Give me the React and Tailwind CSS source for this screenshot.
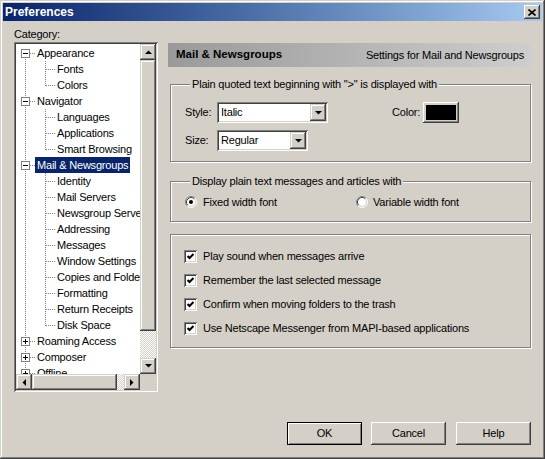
import React from 'react';

// win2k style bevels
const raised = 'shadow-[inset_-1px_-1px_#404040,inset_1px_1px_#d4d0c8,inset_-2px_-2px_#808080,inset_2px_2px_#fff]';
const btn3d = 'shadow-[inset_-1px_-1px_#404040,inset_1px_1px_#fff,inset_-2px_-2px_#808080,inset_2px_2px_#d4d0c8]';
const sunken = 'shadow-[inset_1px_1px_#808080,inset_-1px_-1px_#fff,inset_2px_2px_#404040,inset_-2px_-2px_#d4d0c8]';
const hatch = 'bg-[image:repeating-conic-gradient(#fff_0%_25%,#d4d0c8_0%_50%)] bg-size-[2px_2px]';

const treeItems = [
  { label: 'Appearance', level: 0, first: true },
  { label: 'Fonts', level: 1 },
  { label: 'Colors', level: 1, last: true },
  { label: 'Navigator', level: 0 },
  { label: 'Languages', level: 1 },
  { label: 'Applications', level: 1 },
  { label: 'Smart Browsing', level: 1, last: true },
  { label: 'Mail & Newsgroups', level: 0, selected: true },
  { label: 'Identity', level: 1 },
  { label: 'Mail Servers', level: 1 },
  { label: 'Newsgroup Servers', level: 1 },
  { label: 'Addressing', level: 1 },
  { label: 'Messages', level: 1 },
  { label: 'Window Settings', level: 1 },
  { label: 'Copies and Folders', level: 1 },
  { label: 'Formatting', level: 1 },
  { label: 'Return Receipts', level: 1 },
  { label: 'Disk Space', level: 1, last: true },
  { label: 'Roaming Access', level: 0, closed: true },
  { label: 'Composer', level: 0, closed: true },
  { label: 'Offline', level: 0, closed: true },
];

const checks = [
  'Play sound when messages arrive',
  'Remember the last selected message',
  'Confirm when moving folders to the trash',
  'Use Netscape Messenger from MAPI-based applications',
];

const Arrow = ({ dir }) => {
  if (dir === 'up' || dir === 'down') {
    return (
      <svg width="7" height="4" className="shrink-0">
        <polygon points={dir === 'up' ? '0,4 7,4 3.5,0.5' : '0,0 7,0 3.5,3.5'} fill="#000" />
      </svg>
    );
  }
  return (
    <svg width="4" height="7" className="shrink-0">
      <polygon points={dir === 'left' ? '4,0 4,7 0.5,3.5' : '0,0 0,7 3.5,3.5'} fill="#000" />
    </svg>
  );
};

const ScrollBtn = ({ dir }) => (
  <div className={`w-[16px] h-[16px] shrink-0 bg-[#d4d0c8] flex items-center justify-center ${raised}`}>
    <Arrow dir={dir} />
  </div>
);

const TreeRow = ({ item }) => {
  const child = item.level === 1;
  return (
    <div className="h-[16px] flex items-center whitespace-nowrap">
      <svg width={child ? 39 : 19} height="16" className="shrink-0" shapeRendering="crispEdges">
        <line x1="9.5" y1={item.first ? 8 : 0} x2="9.5" y2="16" stroke="#808080" strokeDasharray="1 1" />
        {child ? (
          <>
            <line x1="29.5" y1="0" x2="29.5" y2={item.last ? 9 : 16} stroke="#808080" strokeDasharray="1 1" />
            <line x1="30" y1="8.5" x2="39" y2="8.5" stroke="#808080" strokeDasharray="1 1" />
          </>
        ) : (
          <>
            <line x1="14" y1="8.5" x2="19" y2="8.5" stroke="#808080" strokeDasharray="1 1" />
            <rect x="5.5" y="4.5" width="8" height="8" fill="#fff" stroke="#808080" />
            <line x1="7" y1="8.5" x2="12" y2="8.5" stroke="#000" />
            {item.closed && <line x1="9.5" y1="6" x2="9.5" y2="11" stroke="#000" />}
          </>
        )}
      </svg>
      <span className={`h-[16px] leading-[16px] px-[2px] ${item.selected ? 'bg-[#0a246a] text-white' : ''}`}>
        {item.label}
      </span>
    </div>
  );
};

const Select = ({ value, className }) => (
  <div className={`h-[21px] p-[2px] bg-white flex ${sunken} ${className}`}>
    <span className="flex-1 leading-[17px] pl-[2px]">{value}</span>
    <div className={`w-[16px] h-[17px] bg-[#d4d0c8] flex items-center justify-center ${raised}`}>
      <Arrow dir="down" />
    </div>
  </div>
);

const Group = ({ legend, className, children }) => (
  <div className={`border border-[#808080] shadow-[inset_1px_1px_#fff,1px_1px_#fff] ${className}`}>
    {legend && (
      <div className="-mt-[7px] ml-[5px] w-fit px-[2px] bg-[#d4d0c8] leading-[13px]">{legend}</div>
    )}
    {children}
  </div>
);

const Radio = ({ checked }) => (
  <svg width="12" height="12" className="shrink-0">
    <circle cx="6" cy="6" r="5" fill="#fff" />
    <path d="M2.11 9.89 A5.5 5.5 0 0 1 9.89 2.11" fill="none" stroke="#808080" />
    <path d="M9.89 2.11 A5.5 5.5 0 0 1 2.11 9.89" fill="none" stroke="#fff" />
    <path d="M2.82 9.18 A4.5 4.5 0 0 1 9.18 2.82" fill="none" stroke="#404040" />
    <path d="M9.18 2.82 A4.5 4.5 0 0 1 2.82 9.18" fill="none" stroke="#d4d0c8" />
    {checked && <circle cx="6" cy="6" r="2" fill="#000" />}
  </svg>
);

const Checkbox = () => (
  <div className={`w-[13px] h-[13px] shrink-0 bg-white flex items-center justify-center ${sunken}`}>
    <svg width="9" height="9">
      <path d="M1.5 4 L3.5 6 L7.5 2" fill="none" stroke="#000" strokeWidth="2" />
    </svg>
  </div>
);

const PushButton = ({ label, isDefault }) => (
  <div
    className={`w-[75px] h-[23px] bg-[#d4d0c8] flex items-center justify-center ${
      isDefault ? 'border border-black shadow-[inset_1px_1px_#fff,inset_-1px_-1px_#808080]' : btn3d
    }`}
  >
    {label}
  </div>
);

export default function App() {
  return (
    <div
      className={`w-[545px] h-[459px] p-[3px] bg-[#d4d0c8] flex flex-col text-[11px] tracking-[-0.2px] text-black font-[family-name:'Liberation_Sans',Arial,sans-serif] ${raised}`}
    >
      {/* title bar */}
      <div className="h-[18px] shrink-0 flex items-center justify-between pl-[2px] pr-[2px] bg-linear-to-r from-[#0a246a] to-[#a6caf0]">
        <span className="text-white font-bold text-[12px] tracking-normal">Preferences</span>
        <div className={`w-[16px] h-[14px] bg-[#d4d0c8] flex items-center justify-center ${btn3d}`}>
          <svg width="8" height="7">
            <path d="M0.5 0.5 L7.5 6.5 M7.5 0.5 L0.5 6.5" stroke="#000" strokeWidth="1.6" />
          </svg>
        </div>
      </div>

      <div className="flex pt-[7px] pl-[11px]">
        {/* category tree */}
        <div className="w-[144px] flex flex-col">
          <div className="leading-[13px]">Category:</div>
          <div className={`mt-[1px] h-[350px] p-[2px] bg-white flex flex-col ${sunken}`}>
            <div className="flex flex-1 min-h-0">
              <div className="flex-1 overflow-hidden pt-[1px]">
                {treeItems.map((item) => (
                  <TreeRow key={item.label} item={item} />
                ))}
              </div>
              <div className="w-[16px] flex flex-col">
                <ScrollBtn dir="up" />
                <div className={`h-[271px] bg-[#d4d0c8] ${raised}`} />
                <div className={`flex-1 ${hatch}`} />
                <ScrollBtn dir="down" />
              </div>
            </div>
            <div className="h-[16px] flex">
              <ScrollBtn dir="left" />
              <div className={`w-[85px] bg-[#d4d0c8] ${raised}`} />
              <div className={`flex-1 ${hatch}`} />
              <ScrollBtn dir="right" />
              <div className="w-[16px] bg-[#d4d0c8]" />
            </div>
          </div>
        </div>

        {/* right pane */}
        <div className="w-[364px] ml-[10px] mt-[15px] flex flex-col">
          <div className="h-[24px] flex items-center justify-between px-[8px] bg-linear-to-r from-[#9a9a9a] to-[#cecece]">
            <span className="font-bold text-[11.5px] tracking-normal">Mail &amp; Newsgroups</span>
            <span>Settings for Mail and Newsgroups</span>
          </div>

          <Group
            legend={'Plain quoted text beginning with ">" is displayed with'}
            className="mt-[17px] ml-[2px] mr-[1px] pb-[10px] pl-[14px]"
          >
            <div className="mt-[11px] h-[21px] flex items-center">
              <span className="w-[32px]">Style:</span>
              <Select value="Italic" className="w-[111px]" />
              <span className="ml-[64px] w-[31px]">Color:</span>
              <div className={`w-[36px] h-[21px] p-[3px] bg-[#d4d0c8] ${btn3d}`}>
                <div className="h-full bg-black" />
              </div>
            </div>
            <div className="mt-[7px] h-[21px] flex items-center">
              <span className="w-[32px]">Size:</span>
              <Select value="Regular" className="w-[91px]" />
            </div>
          </Group>

          <Group
            legend="Display plain text messages and articles with"
            className="mt-[19px] ml-[2px] mr-[1px] pb-[11px] pl-[14px]"
          >
            <div className="mt-[6px] h-[16px] flex items-center">
              <div className="w-[171px] flex items-center gap-[6px]">
                <Radio checked />
                <span>Fixed width font</span>
              </div>
              <div className="flex items-center gap-[5px]">
                <Radio />
                <span>Variable width font</span>
              </div>
            </div>
          </Group>

          <Group className="mt-[12px] ml-[2px] mr-[1px] pt-[13px] pb-[11px] pl-[13px] flex flex-col gap-[8px]">
            {checks.map((c) => (
              <div key={c} className="h-[16px] flex items-center gap-[6px]">
                <Checkbox />
                <span>{c}</span>
              </div>
            ))}
          </Group>
        </div>
      </div>

      <div className="mt-auto flex justify-end gap-[9px] pr-[11px] pb-[11px]">
        <PushButton label="OK" isDefault />
        <PushButton label="Cancel" />
        <div className="ml-[1px]">
          <PushButton label="Help" />
        </div>
      </div>
    </div>
  );
}
